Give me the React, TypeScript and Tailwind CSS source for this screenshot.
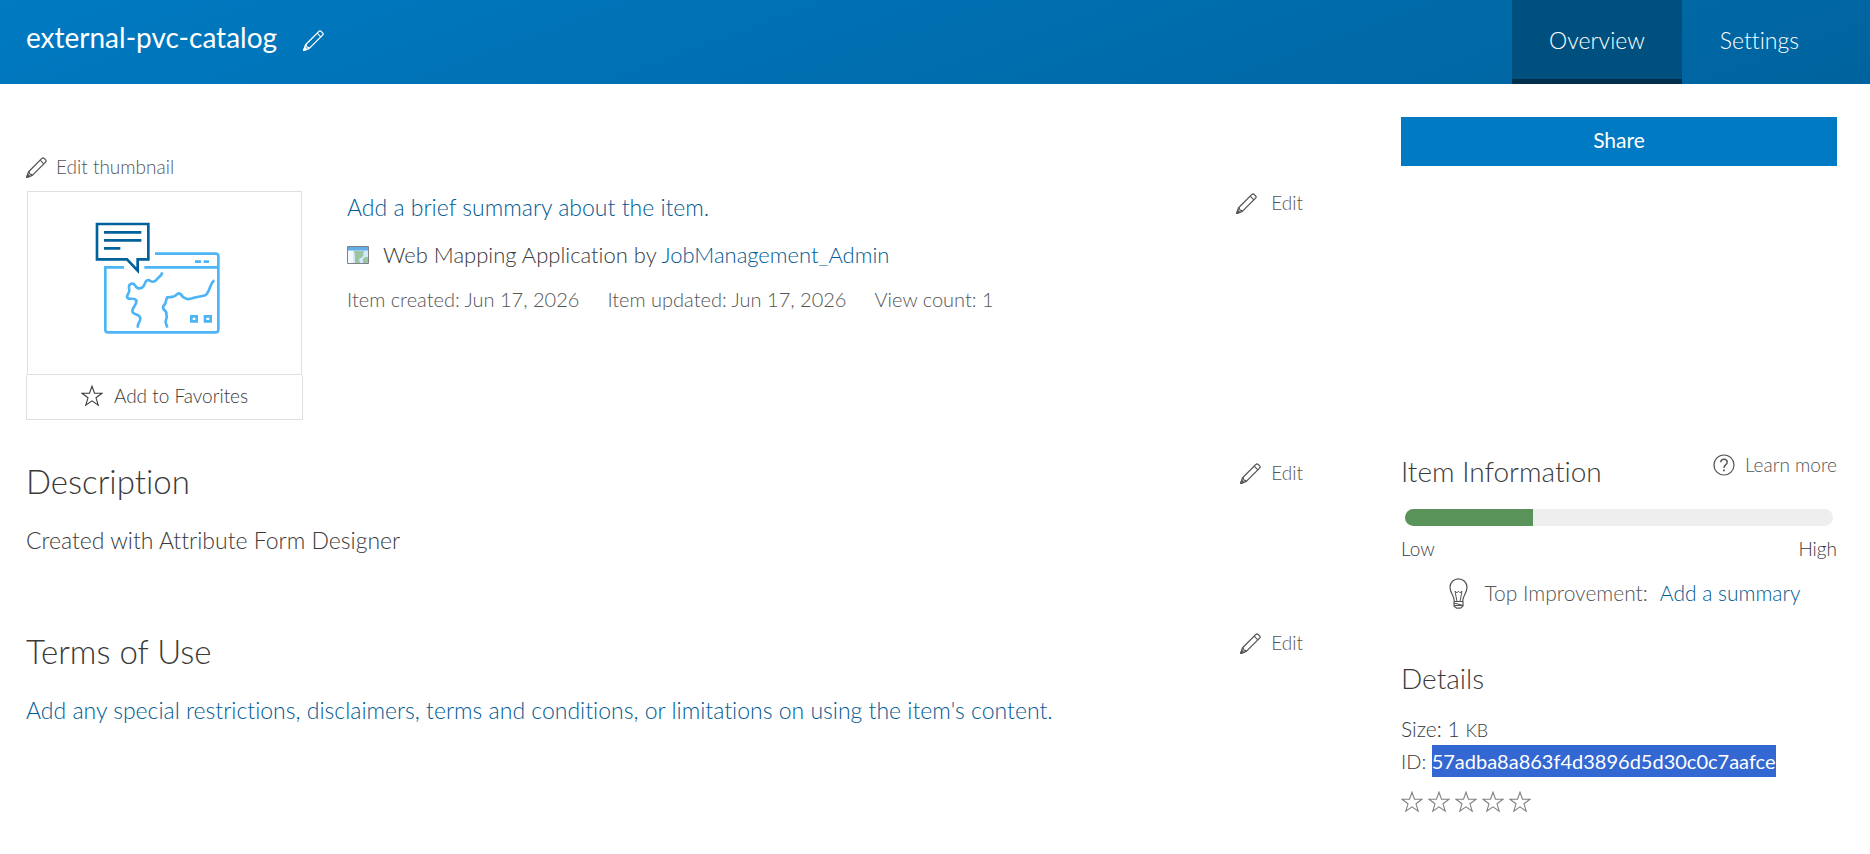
import React from "react";

function PencilIcon() {
  return (
    <svg className="size-[21px] shrink-0" viewBox="0 0 21 21" fill="none" stroke="currentColor" strokeWidth="1.3" aria-hidden="true">
      <path d="M0.8 20.3 2.6 14.8 15.9 1.4Q17 .4 18.1 1.4L19.6 2.9Q20.7 4 19.6 5.1L6.3 18.4Z" strokeLinejoin="round" />
      <path d="M2.6 14.8Q3.6 14.9 3.9 17.1Q6.2 17.3 6.3 18.4M14.2 3.2 17.8 6.8" strokeWidth="1.1" />
      <path d="M0.8 20.3 1.7 17.4 3.7 19.4Z" fill="currentColor" />
    </svg>
  );
}

function StarIcon() {
  return (
    <svg className="size-[22px] shrink-0" viewBox="0 0 22 22" fill="none" stroke="currentColor" strokeWidth="1.1" aria-hidden="true">
      <path d="M11 1.2 13.5 8.2H21L15 12.8 17.2 20.2 11 15.8 4.8 20.2 7 12.8 1 8.2H8.5Z" />
    </svg>
  );
}

function MapNoteArt() {
  return (
    <svg className="block w-full" viewBox="84 36 819 546" fill="none" role="img" aria-label="Web map with a comment">
      <g stroke="#4db5f5" strokeWidth="8">
        <path d="M465 221H647Q655 221 655 229V449Q655 457 647 457H324Q316 457 316 449V262H372M433 262H655" />
        <path d="M585 245H603M611 245H627" />
        <path d="M574 409H590V424H574ZM615 409H632V424H615Z" />
        <path d="M487 277C484 290 475 290 470 299C460 310 454 304 446 300C434 300 437 310 431 318C424 329 411 327 405 316C400 307 386 310 387 323C392 338 381 342 381 351C385 363 401 350 409 361C412 376 393 382 398 397C404 406 418 402 421 414C423 427 409 430 414 443" />
        <path d="M643 301C629 310 631 334 616 346C600 351 588 350 577 355C566 359 556 357 549 351C543 343 538 336 531 343C521 354 512 350 502 352C495 361 501 370 490 378C484 391 503 392 499 403C505 415 492 422 498 431L502 443" />
      </g>
      <path d="M291 132H445V238H413V272L381 238H291ZM312 157H424M312 181H424M312 205H361" stroke="#00619b" strokeWidth="8" />
    </svg>
  );
}

function AppTypeIcon() {
  return (
    <svg className="h-[18px] w-[22px] shrink-0" viewBox="0 0 22 18" aria-hidden="true">
      <path fill="#cfeaf8" d="M1 1H21V17H1Z" />
      <path fill="#f4f9fd" d="M1 4H6V17H1Z" />
      <path fill="#9cc4a0" d="M7 5H17L16 8 17 9 14 12 12 13 13 17H8V9ZM16 17 16 13 18 11 21 11V17Z" />
      <path fill="#62aee4" d="M1 1H21V4.5H1Z" />
      <path fill="none" stroke="#7d8286" d="M.5.5H21.5V17.5H.5Z" />
    </svg>
  );
}

function HelpIcon() {
  return (
    <svg className="size-[22px] shrink-0" viewBox="0 0 22 22" fill="none" stroke="currentColor" strokeWidth="1.2" aria-hidden="true">
      <circle cx="11" cy="11" r="10" />
      <path d="M7.8 8.2Q7.8 5.2 11 5.2T14.2 8.2Q14.2 9.7 12.6 10.9T11 14" strokeWidth="1.4" />
      <path d="M11 15.4V17.2" strokeWidth="1.8" />
    </svg>
  );
}

function BulbIcon() {
  return (
    <svg className="h-[31px] w-[19px] shrink-0" viewBox="0 0 19 31" fill="none" stroke="currentColor" strokeWidth="1.2" aria-hidden="true">
      <path d="M5.3 23.5C5.3 17 1 15.5 1 9.3A8.5 8.5 0 0 1 18 9.3C18 15.5 13.7 17 13.7 23.5Z" />
      <path d="M8 23.5 6 13.2 8 14.8 9.5 13.2 11 14.8 13 13.2 11 23.5" strokeWidth="1" />
      <path d="M5 23.5V28L7.5 30.2H11.5L14 28V23.5M5 25 14 27.5M5 27.5H14" />
    </svg>
  );
}

function EditButton({ gap = "gap-[10px]" }: { gap?: string }) {
  return (
    <button type="button" className={`flex items-center ${gap} text-[19px] leading-6 text-[#555]`}>
      <PencilIcon />
      Edit
    </button>
  );
}

function Section({ title, children }: { title: string; children: React.ReactNode }) {
  return (
    <section>
      <div className="flex items-start justify-between">
        <h2 className="text-[33px] leading-10">{title}</h2>
        <EditButton />
      </div>
      <div className="mt-[23px] text-[23px] leading-8">{children}</div>
    </section>
  );
}

export default function App() {
  return (
    <div className="min-h-screen bg-white font-['Lato','Avenir_Next',sans-serif] font-light text-[#3a3a3a] [font-variant-ligatures:none]">
      <header className="flex h-[84px] items-stretch justify-between bg-linear-[160deg] from-[#007ac2] to-[#00639e] pr-[33px] pl-[26px] text-white">
        <div className="flex items-center gap-[26px] pb-[10px]">
          <h1 className="text-[28px] leading-9 font-normal">external-pvc-catalog</h1>
          <button type="button" aria-label="Edit title" className="pt-[6px]">
            <PencilIcon />
          </button>
        </div>
        <nav className="flex text-[23px] leading-8">
          <a href="#overview" aria-current="page" className="flex items-center border-b-[5px] border-[#002f4b] bg-[#00507f] px-[37px]">
            Overview
          </a>
          <a href="#settings" className="flex items-center px-[38px] pb-[5px]">
            Settings
          </a>
        </nav>
      </header>

      <div className="flex gap-[98px] pt-[33px] pr-[33px] pl-[26px]">
        <main className="min-w-0 flex-1">
          <div className="flex gap-[44px] pt-[38px]">
            <div className="w-[277px] shrink-0">
              <button type="button" className="flex items-center gap-[9px] text-[19px] leading-6 text-[#555]">
                <PencilIcon />
                Edit thumbnail
              </button>
              <div className="mx-px mt-3 border border-[#dfdfdf]">
                <MapNoteArt />
              </div>
              <button type="button" className="flex h-[45px] w-full items-center justify-center gap-[11px] border border-t-0 border-[#dfdfdf] pb-[2px] text-[19px] leading-6">
                <StarIcon />
                Add to Favorites
              </button>
            </div>
            <div className="flex min-w-0 flex-1 items-start justify-between pt-9">
              <div>
                <a href="#summary" className="block text-[23px] leading-8 text-[#005a92]">
                  Add a brief summary about the item.
                </a>
                <p className="mt-4 flex items-center gap-[14px] text-[22px] leading-8">
                  <AppTypeIcon />
                  <span>
                    Web Mapping Application by{" "}
                    <a href="#owner" className="text-[#005a92]">JobManagement_Admin</a>
                  </span>
                </p>
                <p className="mt-4 flex gap-[28px] text-[20px] leading-6 text-[#555]">
                  <span>Item created: Jun 17, 2026</span>
                  <span>Item updated: Jun 17, 2026</span>
                  <span>View count: 1</span>
                </p>
              </div>
              <EditButton gap="gap-[14px]" />
            </div>
          </div>
          <div className="mt-[41px] flex flex-col gap-[75px]">
            <Section title="Description">Created with Attribute Form Designer</Section>
            <Section title="Terms of Use">
              <a href="#terms" className="text-[#005a92]">
                Add any special restrictions, disclaimers, terms and conditions, or limitations on using the item's content.
              </a>
            </Section>
          </div>
        </main>

        <aside className="w-[436px] shrink-0">
          <button type="button" className="h-[49px] w-full bg-[#007ac2] pb-1 text-[21px] font-normal text-white">
            Share
          </button>
          <section className="mt-[287px]">
            <div className="flex items-start justify-between">
              <h2 className="text-[28px] leading-9">Item Information</h2>
              <a href="#learn" className="flex items-center gap-[10px] text-[19px] leading-6 text-[#555]">
                <HelpIcon />
                Learn more
              </a>
            </div>
            <div role="progressbar" aria-label="Item information" aria-valuenow={30} className="mx-1 mt-5 h-[17px] overflow-hidden rounded-full bg-[#eee]">
              <div className="h-full w-[30%] bg-[#5a9359]" />
            </div>
            <div className="mt-[11px] flex justify-between text-[19px] leading-6">
              <span>Low</span>
              <span>High</span>
            </div>
            <div className="mt-4 flex items-center justify-center gap-4 pl-3 text-[21px] leading-8 text-[#555]">
              <BulbIcon />
              <p className="flex gap-3">
                Top Improvement:
                <a href="#summary" className="text-[#005a92]">Add a summary</a>
              </p>
            </div>
          </section>
          <section className="mt-[51px]">
            <h2 className="text-[28px] leading-9">Details</h2>
            <p className="mt-[17px] text-[21px] leading-8">Size: 1 <span className="text-lg">KB</span></p>
            <p className="text-[20px] leading-8">
              ID: <span className="inline-block bg-[#3367d1] font-normal text-white">57adba8a863f4d3896d5d30c0c7aafce</span>
            </p>
            <div role="img" aria-label="No ratings" className="mt-[14px] flex gap-[5px] text-[#808080]">
              <StarIcon />
              <StarIcon />
              <StarIcon />
              <StarIcon />
              <StarIcon />
            </div>
          </section>
        </aside>
      </div>
    </div>
  );
}
